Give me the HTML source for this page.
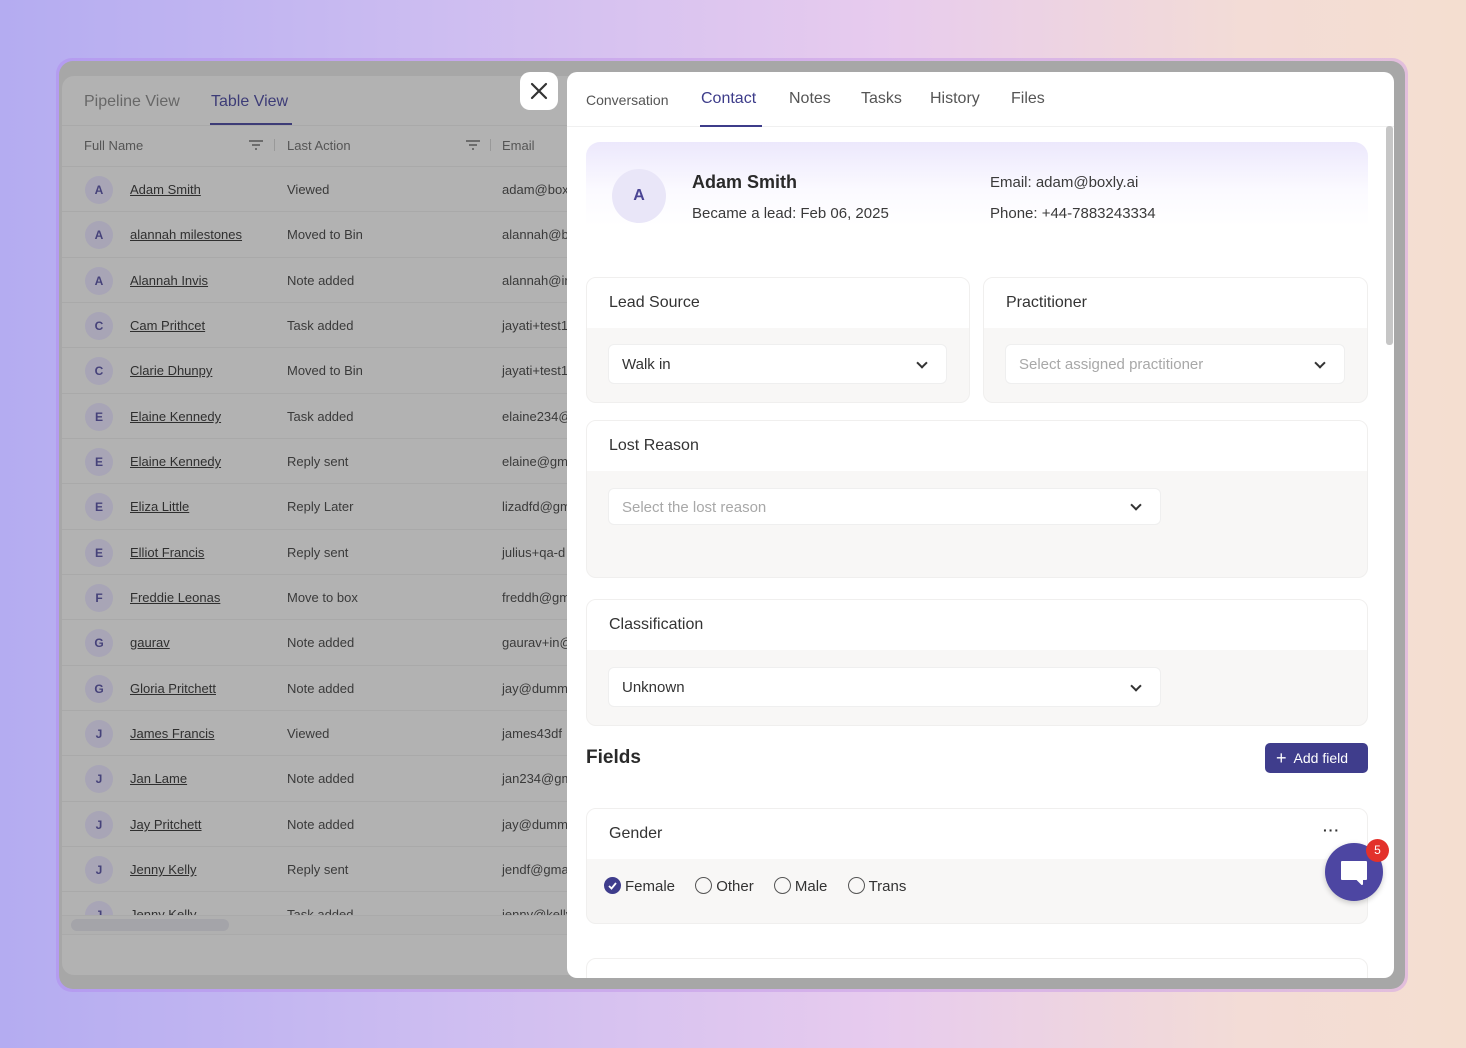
<!DOCTYPE html>
<html><head><meta charset="utf-8">
<style>
*{box-sizing:border-box;margin:0;padding:0}
body{width:1466px;height:1048px;overflow:hidden;font-family:"Liberation Sans",sans-serif;background:linear-gradient(90deg,#b4acf1 0%,#cdbdf1 30%,#e7cbee 60%,#f3dcd6 85%,#f4ded0 100%);position:relative}
.frame{position:absolute;left:56px;top:58px;width:1352px;height:934px;border-radius:16px;background:linear-gradient(90deg,#b49cf0,#d6b2ea 60%,#e2bedc);padding:3px}
.frame-in{width:100%;height:100%;border-radius:14px;background:#a7a7a7;position:relative;overflow:hidden}
.left{position:absolute;left:3px;top:15px;width:520px;height:899px;background:#b2b2b2;border-radius:12px 0 0 12px;overflow:hidden}
.abs{position:absolute}
.ltab{position:absolute;top:17px;font-size:16px;color:#676767}
.th{position:absolute;top:62px;font-size:13px;color:#555}
.row{position:absolute;left:0;width:520px;height:45px;border-top:1px solid #a9a9a9}
.av{position:absolute;left:25px;top:9px;width:28px;height:28px;border-radius:50%;background:#a8a5b6;color:#46427a;font-size:12px;font-weight:bold;text-align:center;line-height:28px}
.nm{position:absolute;left:70px;top:15px;font-size:13px;color:#2f2f2f;text-decoration:underline}
.ac{position:absolute;left:227px;top:15px;font-size:13px;color:#3a3a3a}
.em{position:absolute;left:442px;top:15px;font-size:13px;color:#3a3a3a;white-space:nowrap}
.right{position:absolute;left:567px;top:72px;width:827px;height:906px;background:#fff;border-radius:10px;overflow:hidden}
.rtab{position:absolute;top:18px;font-size:16px;color:#555}
.card{position:absolute;left:19px;width:782px;border:1px solid #f0efee;border-radius:10px;background:#f8f7f6;overflow:hidden}
.card .hd{height:50px;background:#fff;padding:16px 22px;font-size:16px;color:#333}
.sel{position:absolute;background:#fff;border:1px solid #efefef;border-radius:6px;height:40px;font-size:15px;padding:11px 13px;color:#333}
.sel.ph{color:#a8a8a8}
.chev{position:absolute;right:20px;top:14px;width:8px;height:8px;border-right:2px solid #333;border-bottom:2px solid #333;transform:rotate(45deg)}
.radio{display:inline-block;width:17px;height:17px;border:1.5px solid #555;border-radius:50%;vertical-align:-3px;margin-right:4px}
.rl{margin-right:16px}
</style></head><body>
<div class="frame"><div class="frame-in">
  <div class="left">
    <div class="ltab" style="left:22px">Pipeline View</div>
    <div class="ltab" style="left:149px;color:#3d3c77">Table View</div>
    <div class="abs" style="left:148px;top:47px;width:82px;height:2px;background:#3d3c77"></div>
    <div class="abs" style="left:0;top:49px;width:520px;height:1px;background:#a9a9a9"></div>
    <div class="th" style="left:22px">Full Name</div>
    <svg class="abs" style="left:186px;top:63px" width="16" height="12"><path d="M1 2h14M4 6h8M7 10h2" stroke="#555" stroke-width="1.6"/></svg>
    <div class="abs" style="left:212px;top:63px;width:1px;height:12px;background:#999"></div>
    <div class="th" style="left:225px">Last Action</div>
    <svg class="abs" style="left:403px;top:63px" width="16" height="12"><path d="M1 2h14M4 6h8M7 10h2" stroke="#555" stroke-width="1.6"/></svg>
    <div class="abs" style="left:428px;top:63px;width:1px;height:12px;background:#999"></div>
    <div class="th" style="left:440px">Email</div>

    <div style="position:absolute;left:-2px;top:0;width:522px;height:899px">
    <div class="row" style="top:90px"><div class="av">A</div><div class="nm">Adam Smith</div><div class="ac">Viewed</div><div class="em">adam@boxly.ai</div></div>
    <div class="row" style="top:135px"><div class="av">A</div><div class="nm">alannah milestones</div><div class="ac">Moved to Bin</div><div class="em">alannah@boxly</div></div>
    <div class="row" style="top:181px"><div class="av">A</div><div class="nm">Alannah Invis</div><div class="ac">Note added</div><div class="em">alannah@invis</div></div>
    <div class="row" style="top:226px"><div class="av">C</div><div class="nm">Cam Prithcet</div><div class="ac">Task added</div><div class="em">jayati+test1</div></div>
    <div class="row" style="top:271px"><div class="av">C</div><div class="nm">Clarie Dhunpy</div><div class="ac">Moved to Bin</div><div class="em">jayati+test1</div></div>
    <div class="row" style="top:317px"><div class="av">E</div><div class="nm">Elaine Kennedy</div><div class="ac">Task added</div><div class="em">elaine234@</div></div>
    <div class="row" style="top:362px"><div class="av">E</div><div class="nm">Elaine Kennedy</div><div class="ac">Reply sent</div><div class="em">elaine@gmail</div></div>
    <div class="row" style="top:407px"><div class="av">E</div><div class="nm">Eliza Little</div><div class="ac">Reply Later</div><div class="em">lizadfd@gmail</div></div>
    <div class="row" style="top:453px"><div class="av">E</div><div class="nm">Elliot Francis</div><div class="ac">Reply sent</div><div class="em">julius+qa-d</div></div>
    <div class="row" style="top:498px"><div class="av">F</div><div class="nm">Freddie Leonas</div><div class="ac">Move to box</div><div class="em">freddh@gmail</div></div>
    <div class="row" style="top:543px"><div class="av">G</div><div class="nm">gaurav</div><div class="ac">Note added</div><div class="em">gaurav+in@</div></div>
    <div class="row" style="top:589px"><div class="av">G</div><div class="nm">Gloria Pritchett</div><div class="ac">Note added</div><div class="em">jay@dummy</div></div>
    <div class="row" style="top:634px"><div class="av">J</div><div class="nm">James Francis</div><div class="ac">Viewed</div><div class="em">james43df</div></div>
    <div class="row" style="top:679px"><div class="av">J</div><div class="nm">Jan Lame</div><div class="ac">Note added</div><div class="em">jan234@gm</div></div>
    <div class="row" style="top:725px"><div class="av">J</div><div class="nm">Jay Pritchett</div><div class="ac">Note added</div><div class="em">jay@dummy</div></div>
    <div class="row" style="top:770px"><div class="av">J</div><div class="nm">Jenny Kelly</div><div class="ac">Reply sent</div><div class="em">jendf@gmail</div></div>
    <div class="row" style="top:815px;height:24px;overflow:hidden"><div class="av">J</div><div class="nm">Jenny Kelly</div><div class="ac">Task added</div><div class="em">jenny@kelly</div></div>
    </div>
    <div class="abs" style="left:0;top:839px;width:520px;height:20px;background:#b0b0b0;border-top:1px solid #aaa;border-bottom:1px solid #aaa"></div>
    <div class="abs" style="left:9px;top:843px;width:158px;height:12px;border-radius:6px;background:#a4a4a9"></div>
  </div>

  <div class="abs" style="left:461px;top:11px;width:38px;height:38px;background:#fff;border-radius:10px">
    <svg width="38" height="38"><path d="M12 12l14 14M26 12l-14 14" stroke="#333" stroke-width="2.2" stroke-linecap="round"/></svg>
  </div>
</div></div>

<div class="right">
  <div class="rtab" style="left:19px;font-size:14px;top:20px">Conversation</div>
  <div class="rtab" style="left:134px;color:#3d3c8a">Contact</div>
  <div class="rtab" style="left:222px">Notes</div>
  <div class="rtab" style="left:294px">Tasks</div>
  <div class="rtab" style="left:363px">History</div>
  <div class="rtab" style="left:444px">Files</div>
  <div class="abs" style="left:0;top:54px;width:827px;height:1px;background:#f0f0f0"></div>
  <div class="abs" style="left:133px;top:53px;width:62px;height:2px;background:#3d3c8a"></div>
  <div class="abs" style="left:819px;top:54px;width:7px;height:219px;border-radius:3px;background:#c6c6c6"></div>

  <div class="abs" style="left:19px;top:70px;width:782px;height:120px;border-radius:14px;background:linear-gradient(180deg,#ece8fc 0%,#fbfaff 40%,#fff 70%)"></div>
  <div class="abs" style="left:45px;top:97px;width:54px;height:54px;border-radius:50%;background:#e9e6f8;color:#4a4494;font-size:16px;font-weight:bold;text-align:center;line-height:54px">A</div>
  <div class="abs" style="left:125px;top:100px;font-size:18px;font-weight:bold;color:#2a2a2a">Adam Smith</div>
  <div class="abs" style="left:125px;top:133px;font-size:15px;color:#3a3a3a">Became a lead: Feb 06, 2025</div>
  <div class="abs" style="left:423px;top:102px;font-size:15px;color:#3a3a3a">Email: adam@boxly.ai</div>
  <div class="abs" style="left:423px;top:133px;font-size:15px;color:#3a3a3a">Phone: +44-7883243334</div>

  <div class="card" style="top:205px;width:384px;height:126px"><div class="hd">Lead Source</div></div>
  <div class="sel" style="left:41px;top:272px;width:339px;">Walk in<div class="chev"></div></div>
  <div class="card" style="left:416px;top:205px;width:385px;height:126px"><div class="hd">Practitioner</div></div>
  <div class="sel ph" style="left:438px;top:272px;width:340px;">Select assigned practitioner<div class="chev"></div></div>

  <div class="card" style="top:348px;height:158px"><div class="hd">Lost Reason</div></div>
  <div class="sel ph" style="left:41px;top:416px;width:553px;height:37px;padding-top:10px">Select the lost reason<div class="chev" style="top:12px"></div></div>

  <div class="card" style="top:527px;height:127px"><div class="hd">Classification</div></div>
  <div class="sel" style="left:41px;top:595px;width:553px;">Unknown<div class="chev"></div></div>

  <div class="abs" style="left:19px;top:675px;font-size:19px;font-weight:bold;color:#2a2a2a">Fields</div>
  <div class="abs" style="left:698px;top:671px;width:103px;height:30px;border-radius:5px;background:#3f3d8c;color:#fff;font-size:14px;line-height:30px;padding-left:11px"><span style="font-size:18px;vertical-align:-1px">+</span>&nbsp; Add field</div>

  <div class="card" style="top:736px;height:116px"><div class="hd">Gender</div></div>
  <div class="abs" style="left:756px;top:750px;font-size:14px;color:#333;letter-spacing:1px;font-weight:bold">···</div>
  <div class="abs" style="left:37px;top:805px;font-size:15px;color:#333;white-space:nowrap">
    <span class="radio" style="background:#3f3d8c;border-color:#3f3d8c;position:relative"><svg style="position:absolute;left:2px;top:2px" width="11" height="11"><path d="M2 6l2.5 2.5L9 3" stroke="#fff" stroke-width="1.8" fill="none"/></svg></span><span class="rl">Female</span>
    <span class="radio"></span><span class="rl">Other</span>
    <span class="radio"></span><span class="rl">Male</span>
    <span class="radio"></span>Trans
  </div>
  <div class="card" style="top:886px;height:40px;background:#fff"></div>
</div>

<div class="abs" style="left:1325px;top:843px;width:58px;height:58px;border-radius:50%;background:#4d46a2;box-shadow:0 2px 6px rgba(0,0,0,.2)">
  <svg width="58" height="58"><path d="M17 19h24v17h-4v5l-5-5H17z" fill="#fff" stroke="#fff" stroke-width="2" stroke-linejoin="round"/></svg>
</div>
<div class="abs" style="left:1366px;top:839px;width:23px;height:23px;border-radius:50%;background:#e3312b;color:#fff;font-size:12px;text-align:center;line-height:23px">5</div>
</body></html>
